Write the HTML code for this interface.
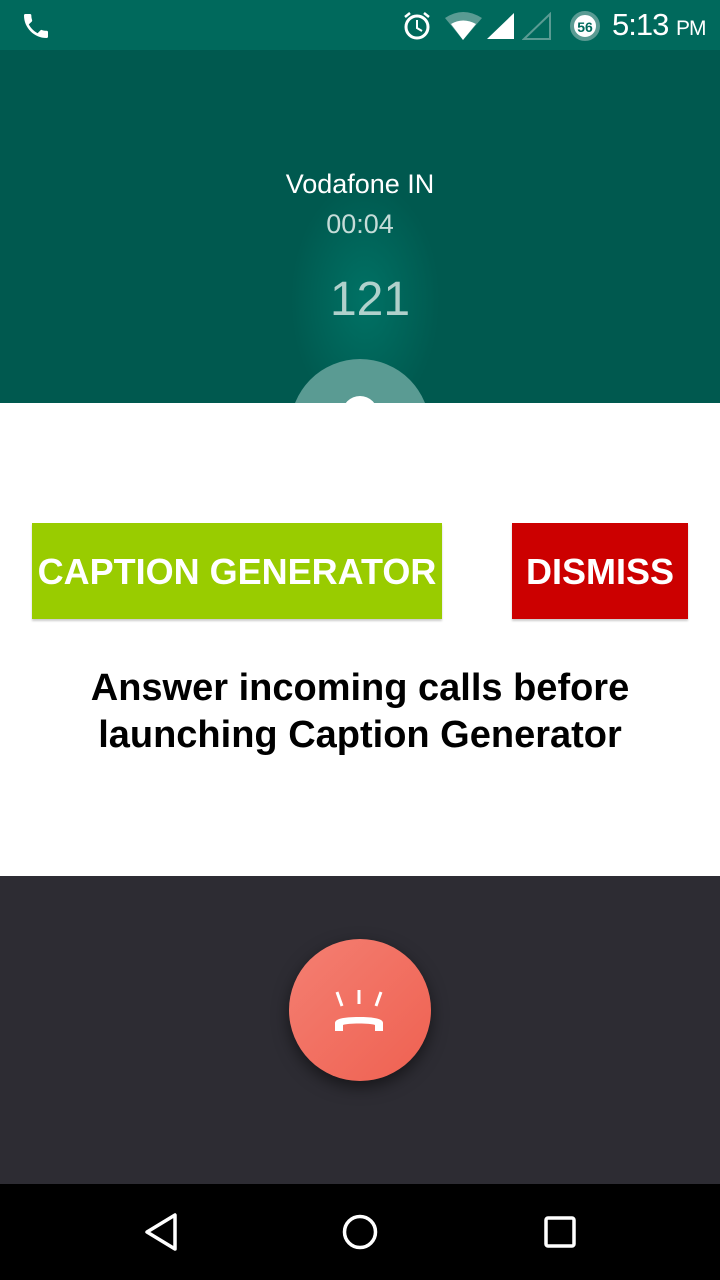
<!DOCTYPE html>
<html><head><style>
body{margin:0;width:720px;height:1280px;position:relative;overflow:hidden;font-family:"Liberation Sans",sans-serif;background:#fff}
.abs{position:absolute}
</style></head><body>
<div class="abs" style="left:0;top:0;width:720px;height:50px;background:#00695c"></div>
<div class="abs" style="left:0;top:50px;width:720px;height:353px;background:#00594f"></div>
<div class="abs" style="left:290px;top:180px;width:150px;height:240px;border-radius:50%;background:radial-gradient(ellipse,rgba(0,130,115,0.6),rgba(0,89,79,0) 70%)"></div>
<div class="abs" style="left:290px;top:359px;width:140px;height:140px;border-radius:50%;background:#5a9b93"></div>
<div class="abs" style="left:342px;top:396px;width:36px;height:36px;border-radius:50%;background:#fff"></div>
<svg class="abs" style="left:20px;top:10px" width="32" height="32" viewBox="0 0 24 24"><path fill="#fff" d="M6.6 10.8c1.4 2.8 3.8 5.1 6.6 6.6l2.2-2.2c.3-.3.7-.4 1-.2 1.1.4 2.3.6 3.6.6.6 0 1 .4 1 1V20c0 .6-.4 1-1 1C10.6 21 3 13.4 3 4c0-.6.4-1 1-1h3.5c.6 0 1 .4 1 1 0 1.3.2 2.5.6 3.6.1.3 0 .7-.2 1z"/></svg>
<svg class="abs" style="left:400px;top:10px" width="34" height="32" viewBox="0 0 34 32"><circle cx="17" cy="17" r="11" fill="none" stroke="#fff" stroke-width="3"/><path d="M17 10v8l5 3" stroke="#fff" stroke-width="2" fill="none"/><path d="M5 7l5-4M29 7l-5-4" stroke="#fff" stroke-width="2.5"/></svg>
<svg class="abs" style="left:444px;top:12px" width="40" height="28" viewBox="0 0 40 28"><path d="M1 6Q19-6 38 6L19 28z" fill="#5a9b93"/><path d="M7 12Q19 5 32 12L19 28z" fill="#fff"/></svg>
<svg class="abs" style="left:486px;top:12px" width="30" height="28"><path d="M28 1V27H1z" fill="#fff"/></svg>
<svg class="abs" style="left:522px;top:12px" width="30" height="28"><path d="M28 2V27H2z" fill="none" stroke="#5a9b93" stroke-width="2"/></svg>
<svg class="abs" style="left:567px;top:9px" width="36" height="34"><circle cx="18" cy="17" r="13" fill="#fff" stroke="#5a9b93" stroke-width="4"/><text x="18" y="23" text-anchor="middle" font-size="14" font-weight="bold" fill="#00695c" font-family="Liberation Sans">56</text></svg>
<div class="abs" style="left:612px;top:7px;color:#fff;font-size:31px;font-weight:500;letter-spacing:-1px">5:13 <span style="font-size:21px">PM</span></div>
<div class="abs" style="left:0;width:720px;top:169px;text-align:center;color:#fff;font-size:27px">Vodafone IN</div>
<div class="abs" style="left:0;width:720px;top:209px;text-align:center;color:#c5dcd8;font-size:27px">00:04</div>
<div class="abs" style="left:10px;width:720px;top:272px;text-align:center;color:#cfe3df;font-size:48px;opacity:.85">121</div>
<div class="abs" style="left:0;top:403px;width:720px;height:473px;background:#fff"></div>
<div class="abs" style="left:32px;top:523px;width:410px;height:96px;background:#99cc00;color:#fff;font-weight:bold;font-size:36px;line-height:98px;text-align:center;box-shadow:0 2px 2px rgba(0,0,0,.2);white-space:nowrap;overflow:hidden">CAPTION GENERATOR</div>
<div class="abs" style="left:512px;top:523px;width:176px;height:96px;background:#cc0000;color:#fff;font-weight:bold;font-size:36px;line-height:98px;text-align:center;box-shadow:0 2px 2px rgba(0,0,0,.2)">DISMISS</div>
<div class="abs" style="left:0;width:720px;top:665px;text-align:center;color:#000;font-weight:bold;font-size:38px;line-height:47px">Answer incoming calls before<br>launching Caption Generator</div>
<div class="abs" style="left:0;top:876px;width:720px;height:308px;background:#2d2c33"></div>
<div class="abs" style="left:289px;top:939px;width:142px;height:142px;border-radius:50%;background:linear-gradient(135deg,#f47f72,#ef6151);box-shadow:0 6px 16px rgba(0,0,0,.5)"></div>
<svg class="abs" style="left:330px;top:985px" width="60" height="50" viewBox="0 0 60 50"><path d="M7 7l5 14M29 5v14M51 7l-5 14" stroke="#fff" stroke-width="3"/><path d="M5 46v-8c0-4 8-6 24-6s24 2 24 6v8h-8v-6c-4-2-28-2-32 0v6z" fill="#fff"/></svg>
<div class="abs" style="left:0;top:1184px;width:720px;height:96px;background:#000"></div>
<svg class="abs" style="left:140px;top:1212px" width="40" height="40"><path d="M35 3V37L7 20z" fill="none" stroke="#fff" stroke-width="3.5" stroke-linejoin="round"/></svg>
<svg class="abs" style="left:340px;top:1212px" width="40" height="40"><circle cx="20" cy="20" r="15.5" fill="none" stroke="#fff" stroke-width="3.5"/></svg>
<svg class="abs" style="left:540px;top:1212px" width="40" height="40"><rect x="6" y="6" width="28" height="28" rx="2" fill="none" stroke="#fff" stroke-width="3.5"/></svg>
</body></html>
